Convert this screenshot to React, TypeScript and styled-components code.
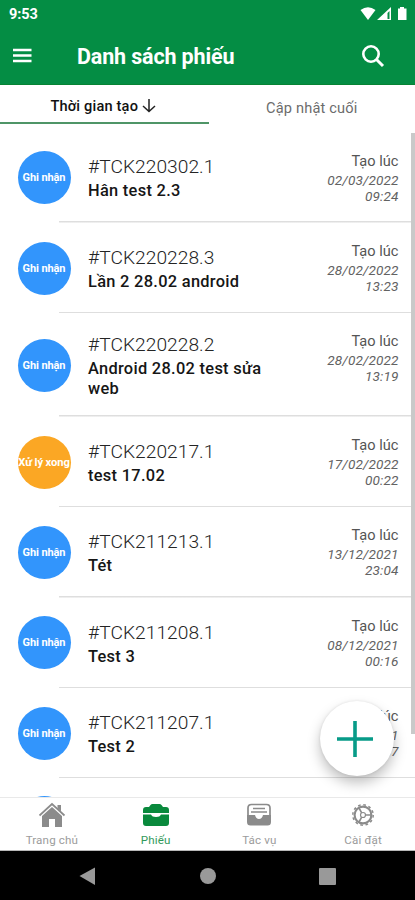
import React from 'react';
import styled, { createGlobalStyle } from 'styled-components';

const GlobalStyle = createGlobalStyle`
  * { box-sizing: border-box; }
  body { margin: 0; background: #fff; font-family: Roboto, "Noto Sans", sans-serif; }
`;

const Screen = styled.div`
  position: relative;
  width: 415px;
  height: 900px;
  display: flex;
  flex-direction: column;
  overflow: hidden;
  background: #fff;
`;

const Header = styled.header`
  height: 84.5px;
  flex: none;
  background: #048d44;
  border-bottom: 1px solid #078334;
  color: #fff;
`;

const StatusBar = styled.div`
  height: 28px;
  display: flex;
  align-items: center;
  justify-content: space-between;
  padding: 0 7px 0 9px;
  font-size: 14.5px;
  font-weight: 700;
  letter-spacing: -0.1px;
`;

const StatusIcons = styled.svg`
  display: block;
  width: 48px;
  height: 16px;
`;

const TitleBar = styled.div`
  height: 56px;
  display: flex;
  align-items: center;
  padding: 0 30px 0 13px;
`;

const Title = styled.h1`
  flex: 1;
  margin: 2px 0 0 45px;
  font-size: 21.5px;
  line-height: 28px;
  font-weight: 700;
  letter-spacing: -0.15px;
  white-space: nowrap;
`;

const Tabs = styled.nav`
  display: flex;
  height: 39px;
  flex: none;
`;

const Tab = styled.div<{ $active?: boolean }>`
  flex: 1;
  display: flex;
  align-items: center;
  justify-content: center;
  gap: 4px;
  padding-top: ${p => (p.$active ? '5px' : '7px')};
  padding-right: ${p => (p.$active ? '2px' : '0')};
  border-bottom: ${p => (p.$active ? '2px solid #4f9567' : '0')};
  color: ${p => (p.$active ? '#111' : '#6c6c6c')};
  font-size: 14.6px;
  font-weight: ${p => (p.$active ? 500 : 400)};
  letter-spacing: 0.18px;
  white-space: nowrap;
`;

const List = styled.main`
  position: relative;
  flex: 1;
  min-height: 0;
  overflow: hidden;
  padding-top: 9px;
`;

const Row = styled.article<{ $tall?: boolean }>`
  height: ${p => (p.$tall ? '103.6px' : '90.4px')};
  display: flex;
  align-items: center;
  padding: 0 16.5px 0 17.5px;
  background: linear-gradient(#dedede, #dedede) 59px 100% / 100% 1.5px no-repeat;

  &:nth-last-child(2) { margin-top: -1px; background: none; }
`;

const Badge = styled.div<{ $done?: boolean }>`
  width: 53px;
  height: 53px;
  flex: none;
  display: flex;
  align-items: center;
  justify-content: center;
  border-radius: 50%;
  background: ${p => (p.$done ? '#fba724' : '#3295fc')};
  color: #fff;
  font-size: ${p => (p.$done ? '11.2px' : '11px')};
  font-weight: 700;
  letter-spacing: -0.1px;
  white-space: nowrap;
`;

const Details = styled.div`
  width: 190px;
  margin-left: 17.5px;
  padding-top: 1.4px;
`;

const Code = styled.div`
  color: #242424;
  font-size: 19.2px;
  font-weight: 300;
  line-height: 24px;
  letter-spacing: 0.03px;
`;

const Name = styled.div`
  color: #161616;
  font-size: 16.4px;
  font-weight: 500;
  line-height: 20px;
  letter-spacing: 0.3px;
  padding-top: 2px;
`;

const Created = styled.div`
  align-self: flex-start;
  flex: 1;
  padding-top: 19px;
  text-align: right;
  color: #555;
  font-size: 14.6px;
  line-height: 19px;
  white-space: nowrap;
`;

const Stamp = styled.div`
  color: #626262;
  font-size: 13.6px;
  font-style: italic;
  letter-spacing: 0.1px;
  line-height: 16px;
  padding-top: 1px;

  & + & { padding-top: 0; }
`;

const Scrollbar = styled.div`
  position: absolute;
  top: 9px;
  right: 0;
  width: 4px;
  height: 601px;
  background: #c9c9c9;
`;

const AddButton = styled.button`
  position: absolute;
  left: 320px;
  top: 701px;
  width: 74px;
  height: 75px;
  display: flex;
  align-items: center;
  justify-content: center;
  padding: 0 4px 0 0;
  border: 0;
  border-radius: 50%;
  background: #fff;
  box-shadow: 0 7px 13px rgba(0, 0, 0, 0.25), 0 0 3px rgba(0, 0, 0, 0.1);
`;

const BottomNav = styled.nav`
  height: 53.5px;
  flex: none;
  display: grid;
  grid-template-columns: repeat(4, 1fr);
  background: #fff;
  border-top: 1px solid #e9e9e9;
  border-bottom: 1px solid #b8b8b8;
`;

const NavItem = styled.div<{ $active?: boolean }>`
  display: flex;
  flex-direction: column;
  align-items: center;
  padding-top: 4px;
  color: ${p => (p.$active ? '#09893c' : '#8b8b8b')};
  font-size: 11.6px;
  line-height: 14px;
  letter-spacing: 0.15px;

  svg { display: block; margin-bottom: 5px; }
  span { opacity: 0.85; }
`;

const SystemBar = styled.footer`
  height: 49.5px;
  flex: none;
  background: #000;
`;

type Ticket = { code: string; name: string; date: string; time: string; done?: boolean; tall?: boolean };

const tickets: Ticket[] = [
  { code: '#TCK220302.1', name: 'Hân test 2.3', date: '02/03/2022', time: '09:24' },
  { code: '#TCK220228.3', name: 'Lần 2 28.02 android', date: '28/02/2022', time: '13:23' },
  { code: '#TCK220228.2', name: 'Android 28.02 test sửa web', date: '28/02/2022', time: '13:19', tall: true },
  { code: '#TCK220217.1', name: 'test 17.02', date: '17/02/2022', time: '00:22', done: true },
  { code: '#TCK211213.1', name: 'Tét', date: '13/12/2021', time: '23:04' },
  { code: '#TCK211208.1', name: 'Test 3', date: '08/12/2021', time: '00:16' },
  { code: '#TCK211207.1', name: 'Test 2', date: '07/12/2021', time: '23:57' },
];

const HomeIcon = () => (
  <svg width="28" height="26" viewBox="0 0 28 26">
    <path d="M1.500 13.500 14 2l12.500 11.500" fill="none" stroke="currentColor" strokeWidth="1.700" />
    <path d="M19.500 3h3.500v6.500l-3.500-3.200Z" fill="currentColor" />
    <path d="M4 14 14 5l10 9v11h-7v-8h-6v8H4Z" fill="currentColor" />
  </svg>
);

const TicketIcon = () => (
  <svg width="28" height="26" viewBox="0 0 28 26" fill="currentColor">
    <path d="M1 11V8q0-3 3-3h3l1.500-2q.8-1 2-1h7q1.200 0 2 1L21 5h3q3 0 3 3v3Z" />
    <path d="M1 12.500h8q1 2.500 5 2.500t5-2.500h8V21q0 3-3 3H4q-3 0-3-3Z" />
  </svg>
);

const InboxIcon = () => (
  <svg width="28" height="26" viewBox="0 0 28 26" fill="none">
    <path d="M3 13V6q0-3.500 3.500-3.500h15Q25 2.500 25 6v7" stroke="currentColor" strokeWidth="1.700" />
    <path d="M8 6.500h12M6 10h16" stroke="currentColor" strokeWidth="1.500" />
    <path d="M2 13h8q1 4 4 4t4-4h8v7q0 3.500-3.500 3.500h-17Q2 23.500 2 20Z" fill="currentColor" />
  </svg>
);

const SettingsIcon = () => (
  <svg width="28" height="26" viewBox="0 0 28 26" fill="none" stroke="currentColor">
    <circle cx="14" cy="13" r="8.400" strokeWidth="2.100" />
    <circle cx="14" cy="13" r="10.200" strokeWidth="1.500" strokeDasharray="2.670" />
    <circle cx="14" cy="13" r="2.500" strokeWidth="1.200" />
    <path d="M16.500 13H22M12.700 10.800 10 6M12.700 15.200 10 20" strokeWidth="1.600" />
  </svg>
);

export default function App() {
  return (
    <>
      <GlobalStyle />
      <Screen>
        <Header>
          <StatusBar>
            <span>9:53</span>
            <StatusIcons viewBox="0 0 48 16" fill="#fff">
              <path d="M.5 4q7.500-5.500 15 0L8 14Z" />
              <path fillRule="evenodd" d="M31 1v13H17ZM29.500 5v8h-2V7Z" />
              <path d="M38 2.500h2V1h4v1.500h2.500V14H38Z" />
            </StatusIcons>
          </StatusBar>
          <TitleBar>
            <svg width="19" height="16" viewBox="0 0 19 16" stroke="#fff" strokeWidth="2.700">
              <path d="M0 2h18.500M0 7.500h18.500M0 13h18.500" />
            </svg>
            <Title>Danh sách phiếu</Title>
            <svg width="24" height="24" viewBox="0 0 24 24" fill="none" stroke="#fff" strokeWidth="2.600">
              <circle cx="10" cy="10" r="7.700" />
              <path d="m15.500 15.500 6.500 6.500" strokeWidth="3" />
            </svg>
          </TitleBar>
        </Header>
        <Tabs>
          <Tab $active>
            Thời gian tạo
            <svg width="14" height="15" viewBox="0 0 14 15" fill="none" stroke="#222" strokeWidth="1.500">
              <path d="M7 1v12.500M1 8l6 5.500L13 8" />
            </svg>
          </Tab>
          <Tab>Cập nhật cuối</Tab>
        </Tabs>
        <List>
          {tickets.map(t => (
            <Row key={t.code} $tall={t.tall}>
              <Badge $done={t.done}>{t.done ? 'Xử lý xong' : 'Ghi nhận'}</Badge>
              <Details>
                <Code>{t.code}</Code>
                <Name>{t.name}</Name>
              </Details>
              <Created>
                Tạo lúc
                <Stamp>{t.date}</Stamp>
                <Stamp>{t.time}</Stamp>
              </Created>
            </Row>
          ))}
          <Row><Badge /></Row>
          <Scrollbar />
        </List>
        <BottomNav>
          <NavItem><HomeIcon /><span>Trang chủ</span></NavItem>
          <NavItem $active><TicketIcon /><span>Phiếu</span></NavItem>
          <NavItem><InboxIcon /><span>Tác vụ</span></NavItem>
          <NavItem><SettingsIcon /><span>Cài đặt</span></NavItem>
        </BottomNav>
        <SystemBar>
          <svg width="415" height="49" viewBox="0 0 415 49" fill="#999">
            <path d="M79.500 25 95 16.500v17.500Z" />
            <circle cx="208" cy="25" r="8" />
            <rect x="319" y="17" width="17" height="17" rx="1" />
          </svg>
        </SystemBar>
        <AddButton aria-label="Add">
          <svg width="36" height="36" viewBox="0 0 36 36" stroke="#079b88" strokeWidth="3.600">
            <path d="M18 0v36M0 18h36" />
          </svg>
        </AddButton>
      </Screen>
    </>
  );
}
